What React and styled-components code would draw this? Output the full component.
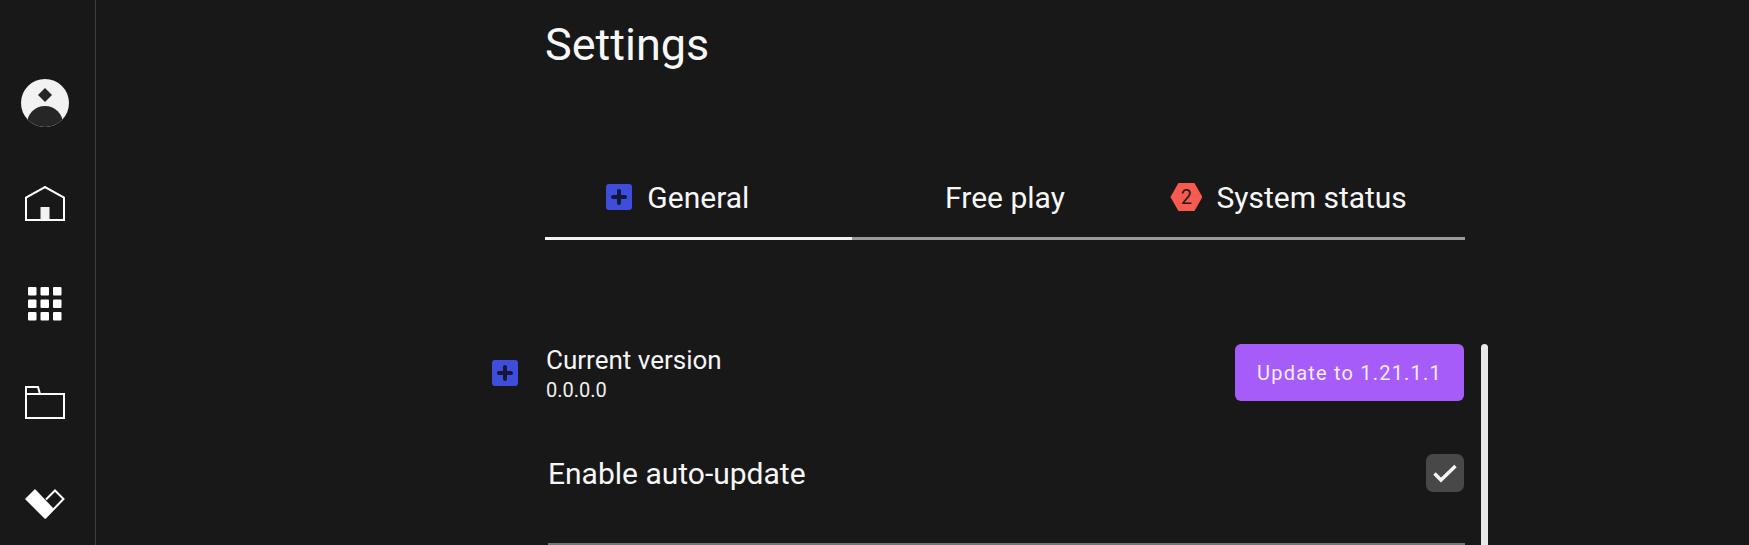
import React from "react";
import styled, { createGlobalStyle } from "styled-components";

const GlobalStyle = createGlobalStyle`
  html, body {
    margin: 0;
    height: 100%;
    background: #181818;
    overflow: hidden;
  }
  #root {
    height: 100%;
  }
`;

const Page = styled.div`
  display: flex;
  height: 545px;
  background: #181818;
  color: #f7f7f7;
  font-family: Roboto, "Liberation Sans", sans-serif;
  overflow: hidden;
`;

const Sidebar = styled.nav`
  flex: none;
  box-sizing: border-box;
  width: 96px;
  height: 100%;
  border-right: 1px solid #3d3d3d;
  padding-top: 79px;
  display: flex;
  flex-direction: column;
  align-items: center;
  padding-right: 5px;
`;

const NavSlot = styled.div`
  height: ${(p) => p.$h}px;
  margin-top: ${(p) => p.$gap}px;
  display: flex;
  align-items: center;
  justify-content: center;
`;

const Main = styled.main`
  flex: none;
  width: 920px;
  margin-left: 449px;
  display: flex;
  flex-direction: column;
`;

const Title = styled.h1`
  margin: 0;
  height: 89px;
  font-size: 45px;
  line-height: 89px;
  font-weight: 400;
`;

const Tabs = styled.div`
  margin-top: 71px;
  display: grid;
  grid-template-columns: repeat(3, 1fr);
`;

const Tab = styled.div`
  box-sizing: border-box;
  height: 80px;
  padding-bottom: 3px;
  border-bottom: 3px solid ${(p) => (p.$active ? "#f2f2f2" : "#9a9a9a")};
  display: flex;
  align-items: center;
  justify-content: center;
  font-size: 30px;
`;

const TabLabel = styled.span`
  position: relative;
`;

const TabIcon = styled.span`
  position: absolute;
  right: calc(100% + ${(p) => p.$gap}px);
  top: 50%;
  transform: translateY(-50%);
  display: flex;
`;

const PlusBadge = styled.span`
  flex: none;
  width: 26px;
  height: 26px;
  border-radius: 3px;
  background: #3f4ddb;
  display: flex;
  align-items: center;
  justify-content: center;
`;

const Hexagon = styled.span`
  flex: none;
  width: 32px;
  height: 28px;
  clip-path: polygon(25% 0, 75% 0, 100% 50%, 75% 100%, 25% 100%, 0 50%);
  background: #f85a50;
  color: #1c1c1c;
  font-size: 20px;
  display: flex;
  align-items: center;
  justify-content: center;
`;

const List = styled.section`
  margin-top: 104px;
  margin-left: -53px;
  margin-right: -23px;
  display: flex;
  flex-direction: column;
`;

const VersionRow = styled.div`
  height: 57px;
  display: flex;
  align-items: center;
`;

const RowIcon = styled.div`
  flex: none;
  width: 54px;
`;

const VersionText = styled.div`
  flex: 1;
  padding-top: 2px;
  display: flex;
  flex-direction: column;
  gap: 3px;
`;

const VersionLabel = styled.div`
  font-size: 26px;
  line-height: 30px;
  color: #f5f5f5;
`;

const VersionValue = styled.div`
  font-size: 20px;
  line-height: 24px;
  color: #f0f0f0;
`;

const UpdateButton = styled.button`
  flex: none;
  box-sizing: border-box;
  width: 229px;
  height: 57px;
  margin-right: 24px;
  border: 0;
  border-radius: 6px;
  background: #a65cf8;
  color: #f5ecff;
  font-family: inherit;
  font-size: 20px;
  letter-spacing: 1.2px;
`;

const ToggleRow = styled.div`
  margin-top: 53px;
  margin-left: 56px;
  margin-right: 24px;
  height: 38px;
  display: flex;
  align-items: center;
  justify-content: space-between;
  font-size: 30px;
`;

const CheckBox = styled.span`
  flex: none;
  width: 38px;
  height: 38px;
  border-radius: 7px;
  background: #484848;
  display: flex;
  align-items: center;
  justify-content: center;
`;

const Divider = styled.div`
  margin-top: 51px;
  margin-left: 56px;
  margin-right: 23px;
  height: 2px;
  background: #757575;
`;

const ScrollThumb = styled.div`
  position: absolute;
  left: 1481px;
  top: 344px;
  width: 7px;
  height: 201px;
  border-radius: 4px 4px 0 0;
  background: #e8e8e8;
`;

const Plus = () => (
  <PlusBadge>
    <svg width="16" height="16" viewBox="0 0 16 16">
      <path d="M8 2v12M2 8h12" stroke="#14163a" strokeWidth="4" strokeLinecap="round" />
    </svg>
  </PlusBadge>
);

const Avatar = () => (
  <svg width="48" height="48" viewBox="0 0 48 48">
    <defs>
      <clipPath id="avatar-clip">
        <circle cx="24" cy="24" r="24" />
      </clipPath>
    </defs>
    <circle cx="24" cy="24" r="24" fill="#f2f2f2" />
    <path d="M24 9l7 7-7 7-7-7z" fill="#262626" />
    <circle cx="24" cy="45" r="18" fill="#262626" clipPath="url(#avatar-clip)" />
  </svg>
);

const HomeIcon = () => (
  <svg width="40" height="35" viewBox="0 0 40 35">
    <path d="M1 34V11.5L20 1l19 10.5V34z" fill="none" stroke="#fff" strokeWidth="2" />
    <rect x="15.5" y="21" width="9" height="13" fill="#f2f2f2" />
  </svg>
);

const GridIcon = () => (
  <svg width="34" height="34" viewBox="0 0 34 34" fill="#fff">
    {[0, 12.5, 25].map((y) =>
      [0, 12.5, 25].map((x) => <rect key={`${x}-${y}`} x={x} y={y} width="8.5" height="8.5" rx="1" />)
    )}
  </svg>
);

const FolderIcon = () => (
  <svg width="40" height="33" viewBox="0 0 40 33" fill="none" stroke="#fff" strokeWidth="2">
    <path d="M1 8h38v24H1z" />
    <path d="M1 8V1h12l2 7" />
  </svg>
);

const HeartIcon = () => (
  <svg width="40" height="31" viewBox="0 0 40 31">
    <path d="M0 10L10 0 29 20 20 30z" fill="#fff" />
    <path d="M21 10.500L30 1.500 38.500 10 20 29" fill="none" stroke="#fff" strokeWidth="2" />
  </svg>
);

const Check = () => (
  <svg width="24" height="19" viewBox="0 0 24 19">
    <path d="M1.500 9.500l6.500 6.500L22.500 2" fill="none" stroke="#f5f5f5" strokeWidth="3.500" />
  </svg>
);

export default function App() {
  return (
    <Page>
      <GlobalStyle />
      <Sidebar>
        <NavSlot $h={48} $gap={0}><Avatar /></NavSlot>
        <NavSlot $h={35} $gap={59}><HomeIcon /></NavSlot>
        <NavSlot $h={34} $gap={66}><GridIcon /></NavSlot>
        <NavSlot $h={33} $gap={65}><FolderIcon /></NavSlot>
        <NavSlot $h={31} $gap={70}><HeartIcon /></NavSlot>
      </Sidebar>
      <Main>
        <Title>Settings</Title>
        <Tabs>
          <Tab $active>
            <TabLabel>
              <TabIcon $gap={15}><Plus /></TabIcon>
              General
            </TabLabel>
          </Tab>
          <Tab><TabLabel>Free play</TabLabel></Tab>
          <Tab>
            <TabLabel>
              <TabIcon $gap={14}><Hexagon>2</Hexagon></TabIcon>
              System status
            </TabLabel>
          </Tab>
        </Tabs>
        <List>
          <VersionRow>
            <RowIcon><Plus /></RowIcon>
            <VersionText>
              <VersionLabel>Current version</VersionLabel>
              <VersionValue>0.0.0.0</VersionValue>
            </VersionText>
            <UpdateButton>Update to 1.21.1.1</UpdateButton>
          </VersionRow>
          <ToggleRow>
            Enable auto-update
            <CheckBox><Check /></CheckBox>
          </ToggleRow>
          <Divider />
        </List>
      </Main>
      <ScrollThumb />
    </Page>
  );
}
